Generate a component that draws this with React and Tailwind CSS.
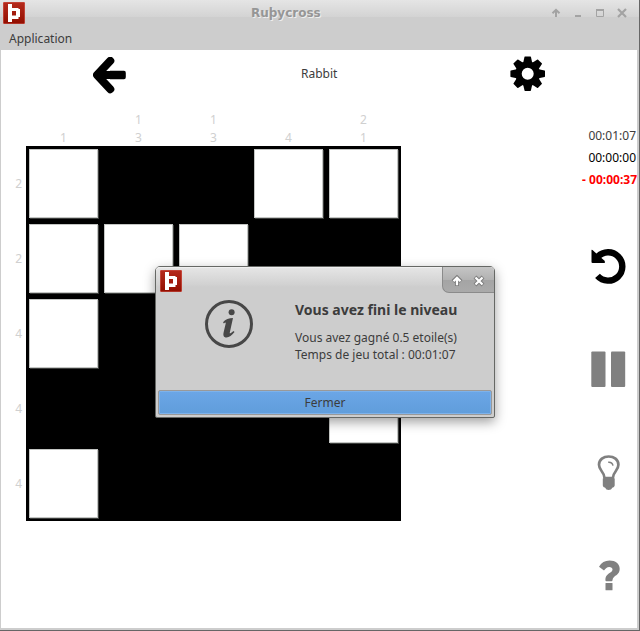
import React from "react";

const ROWS = [
  { clue: "2", cells: "01100" },
  { clue: "2", cells: "00011" },
  { clue: "4", cells: "01111" },
  { clue: "4", cells: "11110" },
  { clue: "4", cells: "01111" },
];
const COLS = [["1"], ["1", "3"], ["1", "3"], ["4"], ["2", "1"]];

function Logo() {
  return (
    <svg className="block h-[22px] w-[22px]" viewBox="0 0 22 22">
      <defs>
        <linearGradient id="red" x1="0" y1="0" x2="0" y2="1">
          <stop offset="0" stopColor="#b52a1c" />
          <stop offset="1" stopColor="#920e00" />
        </linearGradient>
      </defs>
      <rect width="22" height="22" rx="1" fill="#cf5a50" />
      <rect x="0.6" y="0.6" width="20.8" height="20.8" rx="0.6" fill="url(#red)" />
      <path fillRule="evenodd" fill="#fff" d="M5 2H9V6H15.500V7H17V15H15.500V17H9V20H5ZM9 9V13.500H13V9Z" />
    </svg>
  );
}

function TitleButtons() {
  return (
    <svg className="block h-[14px] w-[80px]" viewBox="550 6 80 14" fill="none" stroke="#a3a3a3">
      <path d="M556 17V11" strokeWidth="2" />
      <path d="M552.500 13.200L556 9.800L559.500 13.200" strokeWidth="2" />
      <path d="M575 16H581" strokeWidth="2" />
      <path d="M596.500 10V16.500H603.500V10" strokeWidth="1" />
      <path d="M596 10H604" strokeWidth="2" />
      <path d="M618 9L626 17M626 9L618 17" strokeWidth="2.200" />
    </svg>
  );
}

function BackIcon() {
  return (
    <svg className="block h-[37px] w-[34px]" viewBox="93 57 34 37">
      <path d="M110.300 60.800L97 75L110.300 89.200M98 75H113" fill="none" stroke="#000" strokeWidth="8" strokeLinecap="round" strokeLinejoin="round" />
      <path d="M110 70.800H124Q125.800 70.800 125.800 73V77Q125.800 79.200 124 79.200H110Z" />
    </svg>
  );
}

function GearIcon() {
  return (
    <svg className="block h-[36px] w-[35px]" viewBox="-17.700 -17.700 35 36">
      <circle r="9.200" fill="none" stroke="#000" strokeWidth="6.400" />
      {[0, 45, 90, 135, 180, 225, 270, 315].map((a) => (
        <path key={a} transform={`rotate(${a})`} d="M-4.500-11L-3.200-16.900Q-3.100-17.300-2.600-17.300H2.600Q3.100-17.300 3.200-16.900L4.500-11Z" />
      ))}
    </svg>
  );
}

function UndoIcon() {
  return (
    <svg className="block h-[37px] w-[35px]" viewBox="591.500 248.500 35 37">
      <path d="M598 276.400A14.200 14.200 0 1 0 598.300 257.200" fill="none" stroke="#000" strokeWidth="6.400" />
      <path d="M592 250.500Q592 250 593 250.600L605.300 261.500V263.500H593Q592 263.500 592 262.500Z" />
    </svg>
  );
}

function PauseIcon() {
  return (
    <svg className="block h-[36px] w-[35px]" viewBox="591.500 351.500 35 36" fill="#808080">
      <rect x="591.800" y="352" width="14.200" height="35.400" rx="1" />
      <rect x="611.500" y="352" width="14.200" height="35.400" rx="1" />
    </svg>
  );
}

function BulbIcon() {
  return (
    <svg className="block h-[37px] w-[25px]" viewBox="596 454 25 37">
      <path d="M604.500 478C604.500 471.500 599 471 599 464.800C599 459.500 603.500 456.500 608.700 456.500S618.400 459.500 618.400 464.800C618.400 471 612.900 471.500 612.900 478Z" fill="none" stroke="#808080" strokeWidth="2.700" />
      <path d="M602.800 478.500H614.700V485.500Q614.500 487.500 612.300 487.800Q611.500 490 608.700 490T605.200 487.800Q602.900 487.500 602.800 485.500Z" fill="#808080" />
      <path d="M608.200 462.200Q612.200 461.800 613 465.600" fill="none" stroke="#808080" strokeWidth="1.500" />
    </svg>
  );
}

function HelpIcon() {
  return (
    <svg className="block h-[31px] w-[21px]" viewBox="599.500 560.500 21 31" fill="#808080">
      <path d="M599.500 567.300Q603 561 610 561C616 561 620.200 564.500 620.200 569.300C620.200 573.500 617.500 575.500 615 577Q613 578.500 613 580.500Q613 581.700 612 581.700H606.800Q605.900 581.700 605.900 580.500C605.900 576.500 608 574.800 610.500 573.300C612.200 572.200 613 571.300 613 569.800C613 568.300 611.700 567.400 609.700 567.400C607.300 567.400 606.500 568.600 604.500 571Z" />
      <rect x="606" y="583.500" width="7" height="7.200" rx="0.500" />
    </svg>
  );
}

function InfoIcon() {
  return (
    <svg className="block h-[48px] w-[48px]" viewBox="205 300 48 48">
      <circle cx="229" cy="324" r="22.500" fill="none" stroke="#474747" strokeWidth="3" />
      <circle cx="231.600" cy="312.300" r="3" fill="#474747" />
      <path d="M223 322.300C225.500 319 229 318 233 318L229.800 332.500C229.500 334 230.500 333.600 233.500 331L234.500 332C231.800 335.200 229.300 337.500 226.500 337.500C223.500 337.500 223 335.200 223.600 332.500L225.700 323.500C225.900 322 225.200 322.200 223.900 323.600Z" fill="#474747" />
    </svg>
  );
}

function DialogButtons() {
  return (
    <svg className="block h-[14px] w-[34px]" viewBox="451 274 34 14" fill="none">
      <g stroke="#7c7c7c" strokeWidth="4">
        <path d="M457 286V280M453 281.500L457 277.500L461 281.500" />
        <path d="M475 277L483 285M483 277L475 285" />
      </g>
      <g stroke="#fff" strokeWidth="2.200">
        <path d="M457 285.200V279M453.500 281.300L457 277.800L460.500 281.300" />
        <path d="M475.500 277.500L482.500 284.500M482.500 277.500L475.500 284.500" />
      </g>
    </svg>
  );
}

function Dialog() {
  return (
    <div className="absolute left-[155px] top-[266px] flex h-[152px] w-[340px] flex-col rounded-t-[5px] rounded-b-[2px] border border-[#666865] bg-[#cdcdcd] shadow-[0_4px_12px_rgba(0,0,0,0.38)]">
      <div className="flex h-[26px] shrink-0 items-start justify-between rounded-t-[4px] bg-[linear-gradient(#e6e6e6_0,#d2d2d2_17px,#cdcdcd_20px)] pl-1 pt-px shadow-[inset_0_1px_0_#f0f0f0]">
        <div className="pt-[2px]"><Logo /></div>
        <div className="-mt-px flex h-[26px] w-[52px] items-start rounded-bl-[7px] rounded-tr-[4px] border-b border-l border-[#8b8b8b] bg-[linear-gradient(#c5c5c5,#b2b2b2_50%,#a4a4a4_51%,#aaa)] pl-[8px] pt-[7px]">
          <DialogButtons />
        </div>
      </div>
      <div className="flex flex-1 pl-[49px] pt-[7px]">
        <InfoIcon />
        <div className="ml-[42px] whitespace-nowrap text-[12px] leading-[17px]">
          <h2 className="text-[14px] font-bold leading-[20px] text-[#3c3c3c]">Vous avez fini le niveau</h2>
          <p className="mt-[9px]">Vous avez gagné 0.5 etoile(s)</p>
          <p>Temps de jeu total : 00:01:07</p>
        </div>
      </div>
      <button className="mx-[2px] mb-[2px] h-[25px] rounded-[2px] border border-[#999] bg-[linear-gradient(#6ba6e6,#609ddb)] pt-px text-[12px] leading-[22px] shadow-[inset_0_0_0_1px_#7db2eb]">Fermer</button>
    </div>
  );
}

export default function App() {
  return (
    <div className="relative flex h-[631px] w-[640px] flex-col overflow-hidden border-b border-r border-[#666] bg-[#cdcdcd] text-[12px] text-[#3c3c3c] [font-family:'Noto_Sans',sans-serif]">
      <header className="flex h-[26px] shrink-0 items-center bg-[linear-gradient(#e5e5e5_0,#d3d3d3_17px,#cdcdcd_17px)] pl-[3px]">
        <Logo />
        <h1 className="ml-[226px] w-[299px] text-[12px] font-bold leading-[14px] text-[#969696] [font-family:'DejaVu_Sans',sans-serif] [text-shadow:1px_1px_0_#eee]">Ruþycross</h1>
        <TitleButtons />
      </header>
      <nav className="flex h-[24px] shrink-0 items-center pl-[9px] pt-[2px]">Application</nav>
      <main className="ml-px mr-[2px] flex h-[578px] flex-col bg-white">
        <div className="flex h-[61px] shrink-0 items-start">
          <div className="ml-[92px] mt-[7px] w-[208px]"><BackIcon /></div>
          <div className="mt-[15px] w-[209px] leading-[17px]">Rabbit</div>
          <div className="mt-[6px]"><GearIcon /></div>
        </div>
        <div className="flex justify-between">
          <div className="text-[#d0d0d0]">
            <div className="ml-[25px] flex h-[35px] items-end">
              {COLS.map((col, i) => (
                <div key={i} className="-mb-px w-[75px] text-center leading-[18px]">
                  {col.map((n, j) => <div key={j}>{n}</div>)}
                </div>
              ))}
            </div>
            <div className="flex">
              <div className="w-[25px]">
                {ROWS.map((r, i) => (
                  <div key={i} className="flex h-[75px] items-center justify-end pr-[4px]">{r.clue}</div>
                ))}
              </div>
              <div className="grid grid-cols-5 bg-black">
                {ROWS.flatMap((r, i) => [...r.cells].map((c, j) => (
                  <div key={`${i}-${j}`} className="h-[75px] w-[75px] pl-[3px] pt-[3px]">
                    {c === "0" && <div className="h-[69px] w-[69px] border border-[#c4c6c4] bg-white shadow-[1px_1px_0_#3c3e3c]" />}
                  </div>
                )))}
              </div>
            </div>
          </div>
          <aside className="flex w-[60px] flex-col items-end pt-[14px] leading-[22px]">
            <div className="pr-px">00:01:07</div>
            <div className="pr-px text-black">00:00:00</div>
            <div className="whitespace-nowrap font-bold text-[#f00]">- 00:00:37</div>
            <div className="mr-[11px] mt-[57px]"><UndoIcon /></div>
            <div className="mr-[11px] mt-[66px]"><PauseIcon /></div>
            <div className="mr-[16px] mt-[67px]"><BulbIcon /></div>
            <div className="mr-[17px] mt-[69px]"><HelpIcon /></div>
          </aside>
        </div>
      </main>
      <Dialog />
    </div>
  );
}
